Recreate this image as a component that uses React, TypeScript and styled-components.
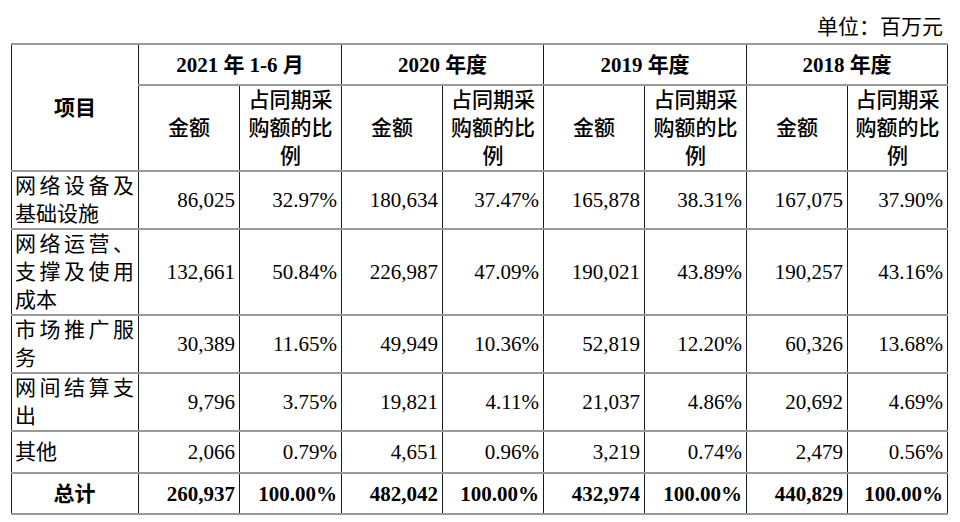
import React from 'react';
import styled, { createGlobalStyle } from 'styled-components';

const GlobalStyle = createGlobalStyle`
    html, body {
        margin: 0;
        padding: 0;
        background: #ffffff;
    }
    body {
        font-family: "Liberation Serif", "Noto Sans CJK SC", serif;
        color: #000000;
    }
`;

const Page = styled.div`
    width: 936px;
    padding: 13px 0 0 11px;
`;

const Unit = styled.div`
    font-size: 21px;
    line-height: 28px;
    text-align: right;
    padding-right: 4px;
    height: 30px;
`;

const Table = styled.table`
    border-collapse: collapse;
    table-layout: fixed;
    width: 936px;
    font-size: 21px;
    line-height: 28px;
    border: 1px solid #555555;
`;

const Cell = styled.td<{ $align?: 'left' | 'right' | 'center' | 'justify'; $bold?: boolean }>`
    padding: 0 4px 0 3px;
    vertical-align: middle;
    text-align: ${(p) => p.$align || 'right'};
    font-weight: ${(p) => (p.$bold ? 700 : 400)};
    border-left: 1px solid #1a1a1a;
    border-right: 1px solid #1a1a1a;
    border-top: 2px solid #9a9a9a;
    border-bottom: 2px solid #9a9a9a;
    white-space: ${(p) => (p.$align === 'justify' || p.$align === 'center' ? 'normal' : 'nowrap')};
    text-justify: inter-character;
`;

const Row = styled.tr<{ $h: number }>`
    height: ${(p) => p.$h}px;
`;

const HeadCell = styled(Cell)<{ $medium?: boolean }>`
    padding: 0 2px;
    font-weight: ${(p) => (p.$bold ? 700 : p.$medium ? 500 : 400)};
`;

type Line = { name: string; values: string[]; h: number };

const years = ['2021 年 1-6 月', '2020 年度', '2019 年度', '2018 年度'];

const lines: Line[] = [
    { name: '网络设备及基础设施', values: ['86,025', '32.97%', '180,634', '37.47%', '165,878', '38.31%', '167,075', '37.90%'], h: 57 },
    { name: '网络运营、支撑及使用成本', values: ['132,661', '50.84%', '226,987', '47.09%', '190,021', '43.89%', '190,257', '43.16%'], h: 85 },
    { name: '市场推广服务', values: ['30,389', '11.65%', '49,949', '10.36%', '52,819', '12.20%', '60,326', '13.68%'], h: 57 },
    { name: '网间结算支出', values: ['9,796', '3.75%', '19,821', '4.11%', '21,037', '4.86%', '20,692', '4.69%'], h: 57 },
    { name: '其他', values: ['2,066', '0.79%', '4,651', '0.96%', '3,219', '0.74%', '2,479', '0.56%'], h: 42 },
];

const total = ['260,937', '100.00%', '482,042', '100.00%', '432,974', '100.00%', '440,829', '100.00%'];

const widths = [127, 101, 102, 101, 101, 101, 102, 101, 100];

export default function App() {
    return (
        <Page>
            <GlobalStyle />
            <Unit>单位：百万元</Unit>
            <Table>
                <colgroup>
                    {widths.map((w, i) => (
                        <col key={i} style={{ width: w }} />
                    ))}
                </colgroup>
                <tbody>
                    <Row $h={41}>
                        <HeadCell rowSpan={2} $align="center" $bold>
                            项目
                        </HeadCell>
                        {years.map((y) => (
                            <HeadCell key={y} colSpan={2} $align="center" $bold>
                                {y}
                            </HeadCell>
                        ))}
                    </Row>
                    <Row $h={86}>
                        {years.map((y) => (
                            <React.Fragment key={y}>
                                <HeadCell $align="center" $medium>
                                    金额
                                </HeadCell>
                                <HeadCell $align="center" $medium>
                                    占同期采购额的比例
                                </HeadCell>
                            </React.Fragment>
                        ))}
                    </Row>
                    {lines.map((l) => (
                        <Row key={l.name} $h={l.h}>
                            <Cell $align="justify">{l.name}</Cell>
                            {l.values.map((v, i) => (
                                <Cell key={i}>{v}</Cell>
                            ))}
                        </Row>
                    ))}
                    <Row $h={41}>
                        <Cell $align="center" $bold>
                            总计
                        </Cell>
                        {total.map((v, i) => (
                            <Cell key={i} $bold>
                                {v}
                            </Cell>
                        ))}
                    </Row>
                </tbody>
            </Table>
        </Page>
    );
}
